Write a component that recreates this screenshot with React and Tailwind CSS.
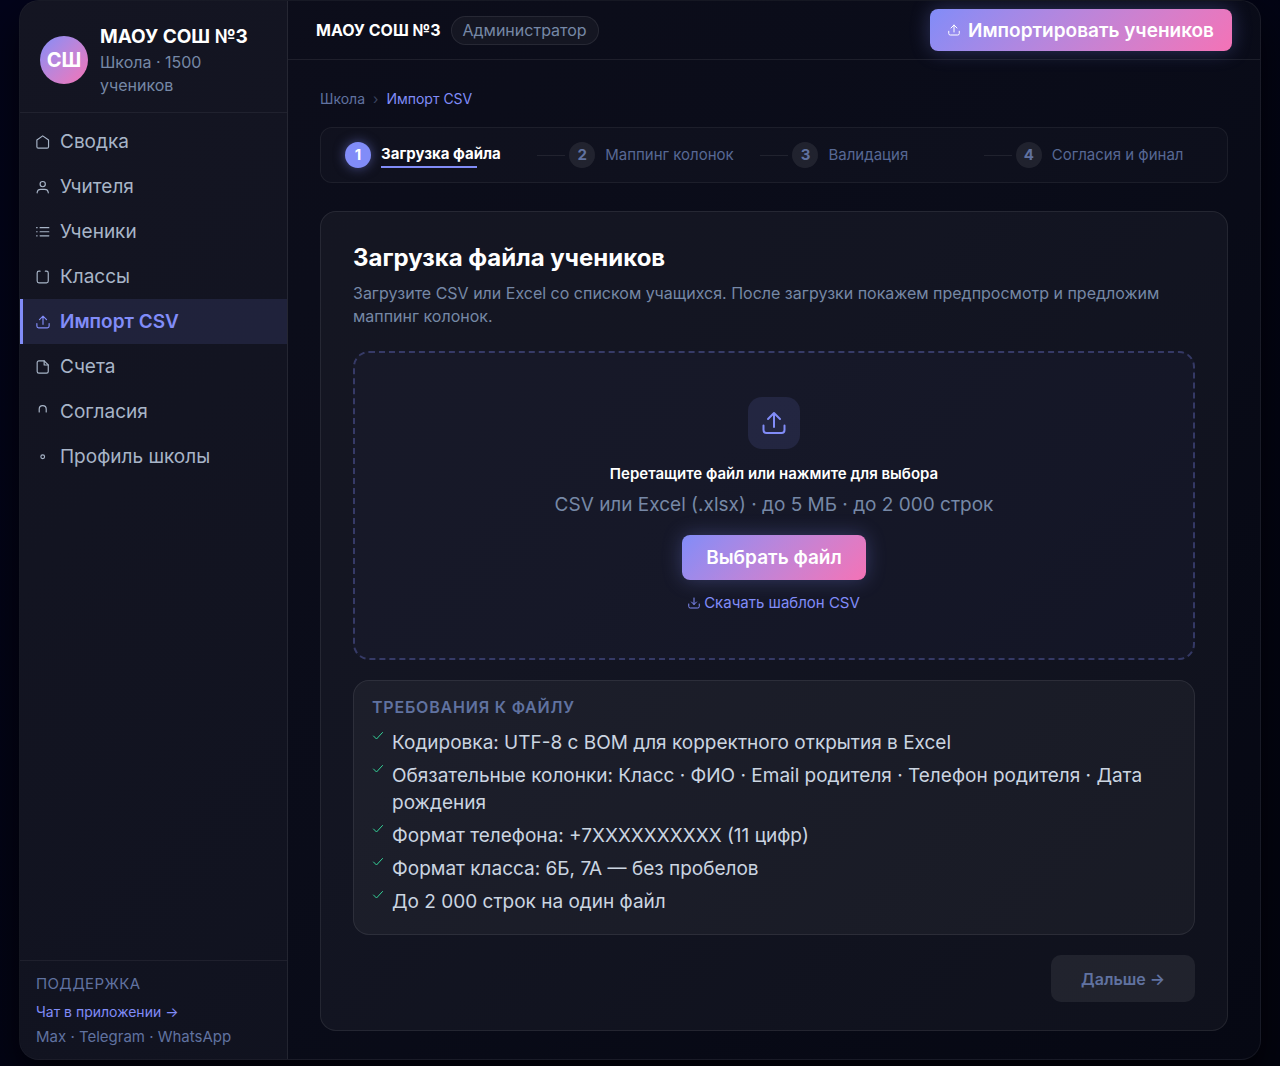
import { useRef, useState } from "react";

function Icon({ name, className, strokeWidth = 2 }) {
  return (
    <svg
      viewBox="0 0 24 24"
      fill="none"
      stroke="currentColor"
      strokeWidth={strokeWidth}
      strokeLinecap="round"
      strokeLinejoin="round"
      className={className}
      aria-hidden="true"
    >
      {name === "home" && <path d="M1.500 8.500 11.500 1.500l10 7V20a2.500 2.500 0 0 1-2.500 2.500H4A2.500 2.500 0 0 1 1.500 20z" />}
      {name === "user" && (
        <>
          <circle cx="11.500" cy="7" r="4.500" />
          <path d="M2 22v-1a6 6 0 0 1 6-5h7a6 6 0 0 1 6 5v1" />
        </>
      )}
      {name === "list" && <path d="M7 4.500h15M7 11.500h15M7 18.500h15M1 4.500h1M1 11.500h1M1 18.500h1" />}
      {name === "board" && <path d="M7 2H5a3 3 0 0 0-3 3v14a3 3 0 0 0 3 3h13a3 3 0 0 0 3-3V5a3 3 0 0 0-3-3h-2" />}
      {name === "upload" && (
        <>
          <path d="M1.500 14.500V19a3 3 0 0 0 3 3h15a3 3 0 0 0 3-3v-4.500" />
          <path d="m6 8 6-6 6 6M12 2v14" />
        </>
      )}
      {name === "download" && (
        <>
          <path d="M1.500 14v5a3 3 0 0 0 3 3h15a3 3 0 0 0 3-3v-5" />
          <path d="m7 10 5 5 5-5M12 15V2" />
        </>
      )}
      {name === "file" && (
        <>
          <path d="M14 1.500H5a3 3 0 0 0-3 3v15a3 3 0 0 0 3 3h13a3 3 0 0 0 3-3v-11z" />
          <path d="M14 1.500v7h7" />
        </>
      )}
      {name === "lock" && <path d="M5.500 12V7a6 6 0 0 1 12 0v5" />}
      {name === "gear" && <circle cx="11.500" cy="11.500" r="3.200" />}
      {name === "check" && <path d="M21 5 9 18l-6-6" />}
    </svg>
  );
}

const menu = [
  { icon: "home", label: "Сводка" },
  { icon: "user", label: "Учителя" },
  { icon: "list", label: "Ученики" },
  { icon: "board", label: "Классы" },
  { icon: "upload", label: "Импорт CSV" },
  { icon: "file", label: "Счета" },
  { icon: "lock", label: "Согласия" },
  { icon: "gear", label: "Профиль школы" },
];

const steps = ["Загрузка файла", "Маппинг колонок", "Валидация", "Согласия и финал"];

const requirements = [
  "Кодировка: UTF-8 с BOM для корректного открытия в Excel",
  "Обязательные колонки: Класс · ФИО · Email родителя · Телефон родителя · Дата рождения",
  "Формат телефона: +7XXXXXXXXXX (11 цифр)",
  "Формат класса: 6Б, 7А — без пробелов",
  "До 2 000 строк на один файл",
];

function Sidebar({ active, onSelect }) {
  return (
    <aside className="flex w-[268px] shrink-0 flex-col border-r border-white/8 bg-white/3">
      <div className="flex items-center gap-3 border-b border-white/6 px-5 pt-[22px] pb-[15px]">
        <div className="flex size-12 shrink-0 items-center justify-center rounded-full bg-linear-135 from-[#818cf8] to-[#f472b6] text-xl font-bold text-white">
          СШ
        </div>
        <div>
          <p className="text-[19px] leading-7 font-bold text-white">МАОУ СОШ №3</p>
          <p className="text-base leading-[23px] text-[#7688a6]">Школа · 1500 учеников</p>
        </div>
      </div>

      <nav className="flex flex-1 flex-col py-1.5">
        {menu.map((item) => (
          <a
            key={item.label}
            href="#"
            onClick={() => onSelect(item.label)}
            className={
              item.label === active
                ? "flex h-[45px] items-center gap-2.5 border-l-3 border-[#818cf8] bg-[#818cf8]/12 px-[13px] text-[19px] leading-[27px] font-semibold text-[#818cf8]"
                : "flex h-[45px] items-center gap-2.5 border-l-3 border-transparent px-[13px] text-[19px] leading-[27px] text-[#a8b5c8]"
            }
          >
            <Icon name={item.icon} className="size-3.5" />
            {item.label}
          </a>
        ))}
      </nav>

      <div className="flex flex-col border-t border-white/6 px-4 pt-[11px] pb-2.5">
        <p className="mb-1 text-[15px] leading-6 tracking-wide text-[#6072a0]">ПОДДЕРЖКА</p>
        <a href="#" className="text-sm leading-6 text-[#818cf8]">Чат в приложении →</a>
        <p className="text-[15px] leading-[25px] text-[#6072a0]">Max · Telegram · WhatsApp</p>
      </div>
    </aside>
  );
}

function Stepper({ current }) {
  return (
    <ol className="flex h-14 items-center rounded-xl border border-white/6 bg-white/2 px-6">
      {steps.map((step, i) => (
        <li key={step} className={i > 0 ? "flex flex-[223_1_0%] items-center" : "flex flex-[188_1_0%] items-center"}>
          {i > 0 && <span className="mx-1 h-px w-7 shrink-0 bg-white/8" />}
          {i === current ? (
            <>
              <span className="flex size-[26px] shrink-0 items-center justify-center rounded-full bg-[#818cf8] text-[15px] font-bold text-white shadow-[0_0_12px_rgba(129,140,248,0.5)]">
                {i + 1}
              </span>
              <span className="ml-2.5 flex flex-col text-[15px] leading-6 font-bold whitespace-nowrap text-white">
                {step}
                <span className="h-0.5 w-4/5 bg-[#818cf8]" />
              </span>
            </>
          ) : (
            <>
              <span className="flex size-[26px] shrink-0 items-center justify-center rounded-full bg-white/8 text-[15px] font-bold text-[#6072a0]">
                {i + 1}
              </span>
              <span className="ml-2.5 text-[15px] leading-6 whitespace-nowrap text-[#576894]">{step}</span>
            </>
          )}
        </li>
      ))}
    </ol>
  );
}

function App() {
  const [active, setActive] = useState("Импорт CSV");
  const [file, setFile] = useState(null);
  const fileInput = useRef(null);

  const openPicker = () => fileInput.current.click();

  return (
    <div className="min-h-screen bg-linear-135 from-[#03041a] to-[#03040f] px-[19px] pb-1.5 font-['Inter',sans-serif]">
      <div className="flex overflow-hidden rounded-[20px] border border-white/6 bg-linear-135 from-[#0d0e1b] via-[#0a0c19] to-[#060813] shadow-[0_20px_40px_rgba(0,0,0,0.7)]">
        <Sidebar active={active} onSelect={setActive} />

        <div className="flex min-w-0 flex-1 flex-col">
          <header className="flex h-[59px] items-center gap-2.5 border-b border-white/8 px-7">
            <p className="text-base font-bold text-white">МАОУ СОШ №3</p>
            <span className="rounded-full border border-white/8 bg-white/4 px-[11px] text-base leading-[27px] text-[#7688a6]">
              Администратор
            </span>
            <button
              type="button"
              onClick={openPicker}
              className="ml-auto flex h-[42px] items-center gap-2 rounded-lg bg-linear-135 from-[#818cf8] to-[#f472b6] px-[18px] text-[19px] leading-[27px] font-semibold text-white shadow-[0_0_20px_rgba(129,140,248,0.3)]"
            >
              <Icon name="upload" className="size-3" />
              Импортировать учеников
            </button>
          </header>

          <main className="px-8 pt-7 pb-7">
            <nav className="mb-[17px] flex items-center gap-2 text-sm leading-[22px]">
              <a href="#" className="text-[#6072a0]">Школа</a>
              <span className="text-[#3a4560]">›</span>
              <span className="text-[#818cf8]">Импорт CSV</span>
            </nav>

            <Stepper current={0} />

            <section className="mt-7 rounded-2xl border border-white/8 bg-white/4 px-8 pt-7 pb-7">
              <h1 className="text-2xl leading-9 font-bold text-white">Загрузка файла учеников</h1>
              <p className="mt-1.5 text-base leading-[23px] text-[#7688a6]">
                Загрузите CSV или Excel со списком учащихся. После загрузки покажем предпросмотр и предложим маппинг
                колонок.
              </p>

              <div className="mt-[23px] flex flex-col items-center rounded-2xl border-2 border-dashed border-[#818cf8]/30 bg-[#818cf8]/3 pt-11 pb-11">
                <input
                  ref={fileInput}
                  type="file"
                  accept=".csv,.xlsx"
                  aria-label="Выбрать файл"
                  className="hidden"
                  onChange={(e) => setFile(e.target.files[0])}
                />
                <div className="flex size-[52px] items-center justify-center rounded-[14px] bg-[#818cf8]/12 text-[#818cf8]">
                  <Icon name="upload" className="size-6" />
                </div>
                <p className="mt-3.5 text-[15px] leading-[22px] font-semibold text-white">
                  {file ? file.name : "Перетащите файл или нажмите для выбора"}
                </p>
                <p className="mt-1.5 text-[19px] leading-[27px] text-[#7688a6]">
                  CSV или Excel (.xlsx) · до 5 МБ · до 2 000 строк
                </p>
                <button
                  type="button"
                  onClick={openPicker}
                  className="mt-[17px] h-[45px] rounded-lg bg-linear-135 from-[#818cf8] to-[#f472b6] px-6 text-[19px] leading-[27px] font-semibold text-white shadow-[0_0_20px_rgba(129,140,248,0.3)]"
                >
                  Выбрать файл
                </button>
                <a href="#" className="mt-3 flex items-center gap-1 text-[15px] leading-[22px] text-[#818cf8]">
                  <Icon name="download" className="size-3" />
                  Скачать шаблон CSV
                </a>
              </div>

              <div className="mt-5 rounded-2xl border border-white/8 bg-white/4 px-[18px] pt-3.5 pb-[19px]">
                <h2 className="text-base font-semibold tracking-wider text-[#6072a0]">ТРЕБОВАНИЯ К ФАЙЛУ</h2>
                <ul className="mt-2.5 flex flex-col gap-1.5">
                  {requirements.map((text) => (
                    <li key={text} className="flex items-start gap-2 text-[19px] leading-[27px] text-[#cbd5e1]">
                      <Icon name="check" className="mt-px size-3 shrink-0 text-[#34d399]" />
                      {text}
                    </li>
                  ))}
                </ul>
              </div>

              <div className="mt-5 flex justify-end">
                <button
                  type="button"
                  disabled={!file}
                  className="h-[47px] rounded-[10px] bg-white/7 px-[30px] text-base font-semibold text-[#6072a0]"
                >
                  Дальше →
                </button>
              </div>
            </section>
          </main>
        </div>
      </div>
    </div>
  );
}

export default App;
